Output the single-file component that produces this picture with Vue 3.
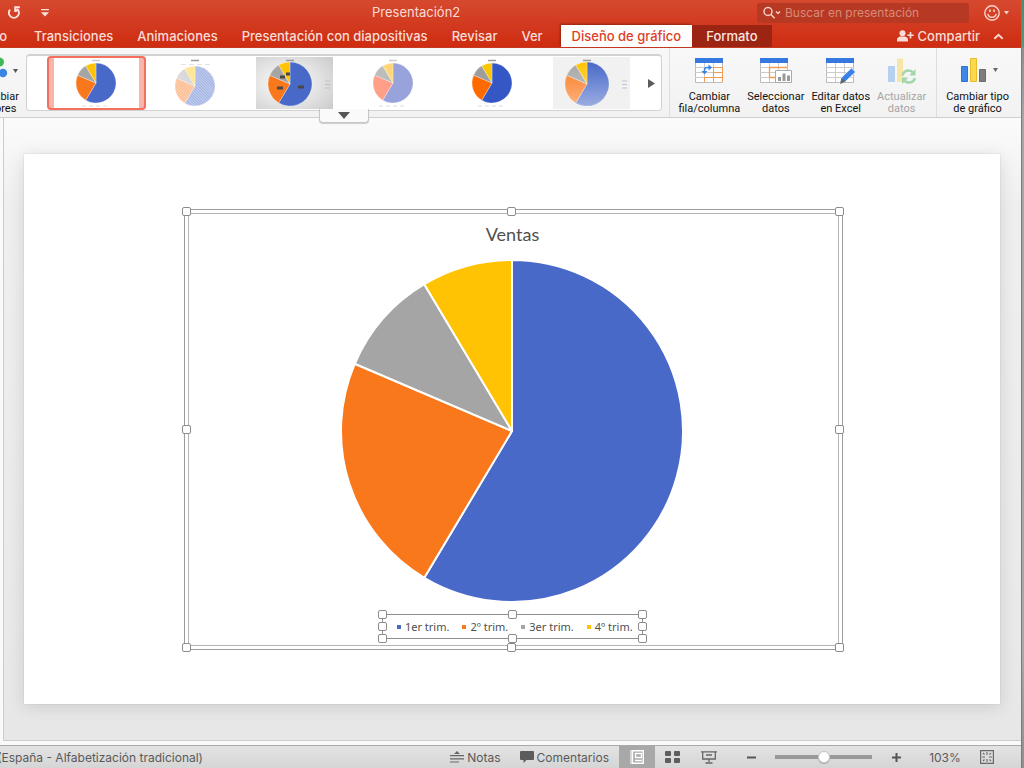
<script setup>
import { ref } from 'vue'

const search = ref('')
const zoom = ref(50)

const sales = [
  { label: '1er trim.', value: 8.2, color: '#4869c8' },
  { label: '2º trim.', value: 3.2, color: '#fa781c' },
  { label: '3er trim.', value: 1.4, color: '#a5a5a5' },
  { label: '4º trim.', value: 1.2, color: '#ffc303' }
]

const total = sales.reduce((sum, s) => sum + s.value, 0)

function slices(cx, cy, r) {
  let angle = 0
  return sales.map((s) => {
    const start = angle
    angle += (s.value / total) * Math.PI * 2
    const large = angle - start > Math.PI ? 1 : 0
    const point = (a) => `${(cx + r * Math.sin(a)).toFixed(2)} ${(cy - r * Math.cos(a)).toFixed(2)}`
    return { ...s, d: `M${cx} ${cy}L${point(start)}A${r} ${r} 0 ${large} 1 ${point(angle)}Z` }
  })
}

const pie = slices(172, 172, 171)

const thumbs = [
  { id: 1, cx: 38, cy: 26, r: 20, kind: 'plain' },
  { id: 2, cx: 38, cy: 29, r: 20, kind: 'hatched' },
  { id: 3, cx: 34, cy: 27, r: 22, kind: 'labelled' },
  { id: 4, cx: 38, cy: 26, r: 20, kind: 'soft' },
  { id: 5, cx: 38, cy: 26, r: 20, kind: 'vivid' },
  { id: 6, cx: 34, cy: 27, r: 22, kind: 'shaded' }
].map((t) => ({ ...t, parts: slices(t.cx, t.cy, t.r) }))

const vivid = ['#3557c6', '#ff6a00', '#9d9d9d', '#fbc500']
const soft = ['#98a3dc', '#ff9f88', '#bcbcbc', '#ffd779']

function fill(thumb, i) {
  if (thumb.kind === 'soft') return soft[i]
  if (thumb.kind === 'vivid') return vivid[i]
  return sales[i].color
}

const tabs = ['Transiciones', 'Animaciones', 'Presentación con diapositivas', 'Revisar', 'Ver']
const handles = ['nw', 'n', 'ne', 'w', 'e', 'sw', 's', 'se']
</script>

<template>
  <div class="app">
    <div class="window">
      <header class="header">
        <div class="titlebar">
          <div class="quick">
            <button class="plain" aria-label="Rehacer">
              <svg width="14" height="14" viewBox="0 0 14 14" fill="none" stroke="#fbe3dd" stroke-width="2">
                <path d="M3 3.6A5 5 0 1 0 10.8 3.6" /><path d="M12.8 1.2H8.2V6" /><path d="M8.4 5.6L11 3" />
              </svg>
            </button>
            <button class="plain" aria-label="Personalizar barra">
              <svg width="10" height="8" viewBox="0 0 10 8" fill="#fbe3dd"><path d="M1 0h8v1.3H1zM1 3.2h8L5 7.4z" /></svg>
            </button>
          </div>
          <h1 class="title">Presentación2</h1>
          <div class="tools">
            <label class="search">
              <svg width="20" height="14" viewBox="0 0 20 14" fill="none" stroke="#f6cfc6" stroke-width="1.5">
                <circle cx="6" cy="5.5" r="4" /><path d="M9 8.5l3.6 3.8M14 5.5l2 2 2-2" />
              </svg>
              <input v-model="search" type="text" placeholder="Buscar en presentación" aria-label="Buscar en presentación">
            </label>
            <button class="plain smile" aria-label="Comentarios de usuario">
              <svg width="26" height="16" viewBox="0 0 26 16" fill="none" stroke="#f9d5cc" stroke-width="1.4">
                <circle cx="8" cy="8" r="7.2" /><path d="M3.800 8.800a4.300 4.300 0 0 0 8.400 0" /><path d="M6 4.5v2.500M10 4.5v2.500" stroke-width="1.6" />
                <path d="M20 6h5l-2.500 3.500z" fill="#f9d5cc" stroke="none" />
              </svg>
            </button>
          </div>
        </div>
        <div class="tabbar">
          <nav class="tabs">
            <div class="clipped"><button class="tab">Diseño</button></div>
            <button v-for="t in tabs" :key="t" class="tab">{{ t }}</button>
            <button class="tab active">Diseño de gráfico</button>
            <button class="tab context">Formato</button>
          </nav>
          <div class="share">
            <button class="plain sharebtn">
              <svg width="17" height="12" viewBox="0 0 17 12" fill="#f9ddd6">
                <circle cx="5.500" cy="3.200" r="3" /><path d="M0 11.500V9.500c0-2 2-2.800 3.500-3.100h4c1.500.3 3.500 1.100 3.500 3.100v2z" />
                <path d="M12.700 2h1.600v2.400h2.400V6h-2.400v2.400h-1.600V6h-2.400V4.400h2.400z" />
              </svg>
              Compartir
            </button>
            <button class="plain" aria-label="Contraer cinta">
              <svg width="11" height="7" viewBox="0 0 11 7" fill="none" stroke="#f9d5cc" stroke-width="2"><path d="M1.300 5.800L5.500 1.800l4.200 4" /></svg>
            </button>
          </div>
        </div>
      </header>

      <section class="ribbon">
        <div class="colors">
          <button class="tool">
            <svg class="icon" width="40" height="28" viewBox="0 0 40 28">
              <circle cx="13" cy="16" r="4.200" fill="#f2a33c" /><circle cx="21.500" cy="5" r="4.500" fill="#41b858" />
              <circle cx="25" cy="16" r="4.200" fill="#3a84e4" /><path d="M35 12h5l-2.500 4z" fill="#555" />
            </svg>
            <span>Cambiar<br>colores</span>
          </button>
        </div>

        <div class="gallery">
          <div class="styles">
            <button
              v-for="t in thumbs" :key="t.id" class="thumb" :class="{ selected: t.id === 1 }"
              :aria-label="'Estilo ' + t.id"
            >
              <svg width="77" height="52" viewBox="0 0 77 52">
                <defs>
                  <radialGradient id="silver" cx=".4" cy=".5" r=".75"><stop offset="0" stop-color="#fff" /><stop offset="1" stop-color="#cdcdcd" /></radialGradient>
                  <linearGradient id="fade" x1="0" y1="0" x2="0" y2="1">
                    <stop offset="0" stop-color="#fff" stop-opacity="0" /><stop offset="1" stop-color="#fff" stop-opacity=".45" />
                  </linearGradient>
                  <pattern id="hatch" width="2" height="2" patternUnits="userSpaceOnUse" patternTransform="rotate(45)">
                    <path d="M0 .5h2" stroke="#fff" stroke-width=".6" stroke-opacity=".6" />
                  </pattern>
                </defs>
                <rect v-if="t.kind === 'labelled'" width="77" height="52" fill="url(#silver)" />
                <rect v-else-if="t.kind === 'shaded'" width="77" height="52" fill="#f1f1f1" />
                <path :d="`M${t.cx - 4} 3.500h8`" :stroke="t.kind === 'soft' || t.kind === 'plain' ? '#ccc' : '#9a9a9a'" stroke-width="1.500" />
                <g :opacity="t.kind === 'hatched' ? 0.5 : 1">
                  <path v-for="(p, i) in t.parts" :key="i" :d="p.d" :fill="fill(t, i)" stroke="#fff" stroke-width=".3" />
                </g>
                <circle v-if="t.kind === 'hatched'" :cx="t.cx" :cy="t.cy" :r="t.r" fill="url(#hatch)" />
                <circle v-if="t.kind === 'shaded'" :cx="t.cx" :cy="t.cy" :r="t.r" fill="url(#fade)" />
                <path v-if="t.kind === 'labelled'" d="M21 31h6M42 30h6M24 20h5M30 17h4" stroke="#484848" stroke-width="2.800" />
                <path v-if="t.kind === 'hatched'" d="M24 7.500h29" stroke="#e2e2e2" stroke-dasharray="5 3" />
                <path v-else-if="t.r === 22" d="M69 24h5M69 27.500h5M69 31h5" stroke="#b9b9c8" stroke-width=".8" />
                <path v-else d="M24 49h28" stroke="#ddd" stroke-dasharray="4 3" />
              </svg>
            </button>
          </div>
          <button class="plain next" aria-label="Estilos siguientes">
            <svg width="7" height="9" viewBox="0 0 7 9" fill="#5c5c5c"><path d="M0 0l7 4.500L0 9z" /></svg>
          </button>
          <button class="plain more" aria-label="Más estilos">
            <svg width="12" height="7" viewBox="0 0 12 7" fill="#555"><path d="M0 0h12L6 7z" /></svg>
          </button>
        </div>

        <div class="group data">
          <button class="tool">
            <svg class="icon" width="28" height="28" viewBox="0 0 28 28" fill="none">
              <path d="M.5 5.500h27v20H.5z" fill="#fff" stroke="#bbb" /><path d="M0 10.500h28M0 15.500h28M0 20.500h28M9.500 5v20M18.500 5v20" stroke="#ccc" />
              <path d="M0 1h28v5H0z" fill="#3478e0" />
              <path d="M18 10.500h9.500M18 15.500h9.500M9 20.500h18.500M18.500 10v15M9.500 20v5M27.500 10v15" stroke="#f59b50" />
              <path d="M9.500 15v-2q0-2.500 2.500-2.500h3" stroke="#3a82e8" stroke-width="1.500" /><path d="M13.500 7.500l3.500 3-3.500 3zM6.500 14h6l-3 3.500z" fill="#3a82e8" />
            </svg>
            <span>Cambiar<br>fila/columna</span>
          </button>
          <button class="tool">
            <svg class="icon" width="34" height="28" viewBox="0 0 34 28" fill="none">
              <path d="M1.500 5.500h27v20h-27z" fill="#fff" stroke="#bbb" /><path d="M1 10.500h28M1 15.500h28M1 20.500h28M10.500 5v20M19.500 5v20" stroke="#ccc" />
              <path d="M1 1h28v5H1z" fill="#3478e0" /><path d="M28 10.500H10.500v10H17" stroke="#f59b50" stroke-width="1.300" />
              <path d="M16.500 13.500h16v12h-16z" fill="#fff" stroke="#aaa" /><path d="M19 20h3v4h-3zM23.500 16.500h3V24h-3zM28 18.500h3V24h-3z" fill="#999" />
            </svg>
            <span>Seleccionar<br>datos</span>
          </button>
          <button class="tool">
            <svg class="icon" width="30" height="28" viewBox="0 0 30 28" fill="none">
              <path d="M.5 5.500h27v20H.5z" fill="#fff" stroke="#bbb" /><path d="M0 10.500h28M0 15.500h28M0 20.500h28M9.500 5v20M18.500 5v20" stroke="#ccc" />
              <path d="M0 1h28v5H0z" fill="#3478e0" />
              <path d="M14 26.500l1.500-6L25.500 11l4 4-10 9.500z" fill="#3a82e8" stroke="#fff" stroke-width=".7" /><path d="M14 27l1.500-6 4 3.800z" fill="#666" />
            </svg>
            <span>Editar datos<br>en Excel</span>
          </button>
          <button class="tool" disabled>
            <svg class="icon" width="30" height="28" viewBox="0 0 30 28" fill="none">
              <path d="M1 9h7v16H1z" fill="#b6d0f2" /><path d="M10 1.500h6V25h-6z" fill="#f8e6a8" />
              <path d="M15.500 18.500q1.500-5 6-5 3 0 5 2.500M28 21q-1.500 4.500-6 4.500-3.500 0-5-2.500" stroke="#a4d6ae" stroke-width="2.500" />
              <path d="M28.500 12v6.500H22zM15 27v-6.500h6.500z" fill="#a4d6ae" />
            </svg>
            <span>Actualizar<br>datos</span>
          </button>
        </div>
        <div class="group type">
          <button class="tool">
            <svg class="icon" width="42" height="28" viewBox="0 0 42 28">
              <path d="M4.500 9.500h6v15h-6z" fill="#3d87ea" stroke="#2f74d4" /><path d="M13.500 1.500h6v23h-6z" fill="#fbd94a" stroke="#e8bd2c" />
              <path d="M22.500 12.500h6v12h-6z" fill="#7d7d7d" stroke="#6b6b6b" /><path d="M36 11h5l-2.500 4z" fill="#666" />
            </svg>
            <span>Cambiar tipo<br>de gráfico</span>
          </button>
        </div>
      </section>

      <main class="stage">
        <div class="canvas">
          <div class="slide">
            <div class="chart">
              <div class="plot">
                <h2>Ventas</h2>
                <svg class="pie" width="344" height="344" viewBox="0 0 344 344" role="img" aria-label="Ventas">
                  <path v-for="p in pie" :key="p.label" :d="p.d" :fill="p.color" stroke="#fff" stroke-width="2" stroke-linejoin="round" />
                </svg>
                <div class="legend">
                  <span v-for="(s, i) in sales" :key="s.label" class="entry"><i :class="'key k' + i" />{{ s.label }}</span>
                  <b v-for="h in handles" :key="h" class="handle" :class="h" />
                </div>
              </div>
              <b v-for="h in handles" :key="h" class="handle" :class="h" />
            </div>
          </div>
        </div>
      </main>

      <footer class="status">
        <div class="language"><span>Español (España - Alfabetización tradicional)</span></div>
        <div class="controls">
          <button class="plain note">
            <svg width="14" height="12" viewBox="0 0 14 12" fill="#666"><path d="M7 0l3 3H4zM0 4h14v1.200H0zM0 7.200h14v1.200H0zM0 10.400h9v1.200H0z" /></svg>
            Notas
          </button>
          <button class="plain note">
            <svg width="14" height="12" viewBox="0 0 14 12" fill="#5c5c5c"><path d="M1 0h12q1 0 1 1v7q0 1-1 1H6.500L3.500 12V9H1Q0 9 0 8V1q0-1 1-1z" /></svg>
            Comentarios
          </button>
          <div class="views">
            <button class="plain view on" aria-label="Normal">
              <svg width="14" height="14" viewBox="0 0 14 14" fill="none" stroke="#fff"><path d="M2.500.7h10.800v12.600H2.500z" stroke-width="1.400" /><path d="M5.500 3.500h6v4h-6zM5 10.500h7" stroke-width="1.400" /><path d="M0 1h3M0 3h3M0 5h3M0 7h3M0 9h3M0 11h3M0 13h3" /></svg>
            </button>
            <button class="plain view" aria-label="Clasificador">
              <svg width="16" height="12" viewBox="0 0 16 12" fill="#5e5e5e"><rect width="6" height="5" rx="1" /><rect x="9" width="6" height="5" rx="1" /><rect y="7" width="6" height="5" rx="1" /><rect x="9" y="7" width="6" height="5" rx="1" /></svg>
            </button>
            <button class="plain view" aria-label="Presentación">
              <svg width="16" height="13" viewBox="0 0 16 13" fill="none" stroke="#666" stroke-width="1.300"><path d="M0 .8h16M1.700 1v7h12.600V1M5 4h6M8 8v3M4.500 12h7" /></svg>
            </button>
          </div>
          <button class="plain step" aria-label="Alejar"><svg width="9" height="9" viewBox="0 0 9 9"><path d="M0 4.500h9" stroke="#555" stroke-width="2" /></svg></button>
          <input v-model="zoom" class="slider" type="range" min="0" max="100" aria-label="Zoom">
          <button class="plain step" aria-label="Acercar"><svg width="9" height="9" viewBox="0 0 9 9"><path d="M0 4.500h9M4.500 0v9" stroke="#555" stroke-width="2" /></svg></button>
          <button class="plain percent">103%</button>
          <button class="plain fit" aria-label="Ajustar a la ventana">
            <svg width="14" height="14" viewBox="0 0 14 14" fill="none" stroke="#6a6a6a"><path d="M.6.6h12.800v12.800H.6z" stroke-width="1.200" /><path d="M7 2v3M7 9v3M2 7h3M9 7h3M3 3l1.500 1.500M11 3L9.500 4.500M3 11l1.500-1.500M11 11L9.500 9.500" stroke-width="1.100" /></svg>
          </button>
        </div>
      </footer>
    </div>
    <div class="edge" />
  </div>
</template>

<style>
body { background: #e9e9e9; }
</style>

<style scoped>
* { box-sizing: border-box; }
.app { display: flex; min-height: 100vh; font-family: Inter, Roboto, "Liberation Sans", sans-serif; overflow: hidden; }
.window { flex: 1; min-width: 0; display: flex; flex-direction: column; }
.edge { width: 3px; background: linear-gradient(#3d9272 0, #4e9a7d 47px, #8f8f8f 48px, #a6a6a6 120px, #a8a8a8 85%, #8f8f8f); border-left: 1px solid #7b7b7b; }
button { font: inherit; border: 0; margin: 0; padding: 0; background: none; color: inherit; white-space: nowrap; }
.plain { display: flex; align-items: center; justify-content: center; }
svg { display: block; flex: none; }

.header { background: linear-gradient(#d6492f, #ce2c10); color: #f9ddd6; border-bottom: 1px solid #c63a22; }
.titlebar { display: grid; grid-template-columns: 372px 1fr auto; align-items: center; height: 25px; }
.quick { display: flex; gap: 19px; padding-left: 7px; }
.title { margin: 0; font-size: 13px; font-weight: 400; line-height: 25px; }
.tools { display: flex; align-items: center; }
.search { display: flex; align-items: center; gap: 3px; width: 212px; height: 20px; padding-left: 5px; background: #b73923; border-radius: 3px; }
.search input { flex: 1; min-width: 0; border: 0; outline: 0; padding: 0; background: none; color: #fff; font: 12px Inter, Roboto, sans-serif; }
.search input::placeholder { color: #da8a7a; opacity: 1; }
.smile { padding: 0 11px 0 15px; }
.tabbar { display: flex; justify-content: space-between; height: 22px; }
.tabs { display: flex; font-size: 13px; font-weight: 500; }
.clipped { display: flex; justify-content: flex-end; width: 22px; padding-right: 3px; overflow: hidden; }
.tab { flex: none; padding: 0 12px; line-height: 22px; }
.active { margin-left: 6px; padding: 0 11px; background: #fdfdfd; color: #dd4027; box-shadow: -1px -1px 2px #8e2411; }
.context { padding: 0 14px; background: #9b2412; color: #fbe6e1; }
.share { display: flex; align-items: center; gap: 13px; padding-right: 17px; font-size: 13px; font-weight: 500; }
.sharebtn { gap: 4px; }

.ribbon { display: flex; height: 70px; background: linear-gradient(#f8f8f8, #f2f2f2); border-bottom: 1px solid #cfcfcf; }
.colors { display: flex; justify-content: flex-end; width: 26px; padding-right: 7px; overflow: hidden; }
.tool { display: flex; flex-direction: column; align-items: center; flex: none; padding-top: 9px; font-family: Roboto, Inter, sans-serif; font-size: 11px; line-height: 12px; color: #111; text-align: center; }
.tool .icon { margin-bottom: 6px; }
.tool:disabled { color: #a5a5a5; }
.gallery { position: relative; display: flex; flex: 1; min-width: 0; margin: 6px 0; border: 1px solid #d2d2d2; border-top-width: 2px; border-radius: 4px; background: #fff; }
.styles { display: flex; flex: 1; padding-left: 20px; overflow: hidden; }
.thumb { display: flex; align-items: center; justify-content: center; flex: none; width: 99px; border-radius: 4px; }
.selected { border: 2px solid #f2705c; background: linear-gradient(90deg, #f8b5ab 5px, #fff 5px calc(100% - 5px), #f8b5ab calc(100% - 5px)); }
.next { width: 19px; }
.more { position: absolute; left: 292px; bottom: -13px; width: 50px; height: 14px; background: #fafafa; border: 1px solid #c6c6c6; border-top: 0; border-radius: 0 0 4px 4px; box-shadow: 0 1px 1px #ccc; }
.group { display: flex; margin-left: 7px; border-left: 1px solid #dedede; }
.data { gap: 7px; padding: 0 3px 0 8px; }
.type { padding: 0 12px 0 9px; }

.stage { flex: 1; display: flex; padding: 0 0 4px 3px; background: #fafafa; border-bottom: 1px solid #a9a9a9; }
.canvas { flex: 1; padding: 36px 21px 36px 20px; border-left: 1px solid #cdcdcd; border-bottom: 1px solid #cdcdcd; background: linear-gradient(#fbfbfb, #efefef 14%, #ebebeb 60%, #e7e7e7); }
.slide { height: 100%; padding-top: 55px; background: #fff; box-shadow: 0 3px 16px rgba(0, 0, 0, .12), 0 0 1px #bbb; }
.chart { position: relative; width: 67.5%; margin-left: 16.4%; padding: 3px; border: 1px solid #9c9c9c; }
.plot { display: flex; flex-direction: column; align-items: center; height: 433px; padding: 10px 2px 0 0; border: 1px solid #b5b5b5; color: #505050; font-family: Lato, sans-serif; }
.plot h2 { margin: 0 0 15px; font-size: 18px; font-weight: 400; line-height: 20px; }
.legend { position: relative; display: flex; align-items: center; gap: 13px; width: 261px; height: 25px; margin-top: 11px; padding-left: 14px; border: 1px solid #8e8e8e; font-size: 11px; white-space: nowrap; font-family: "Noto Sans", Lato, sans-serif; }
.entry { display: flex; align-items: center; gap: 4px; }
.key { width: 4px; height: 4px; }
.k0 { background: #4869c8; }
.k1 { background: #fa781c; }
.k2 { background: #a5a5a5; }
.k3 { background: #ffc303; }
.handle { position: absolute; width: 9px; height: 9px; border: 1px solid #8c8c8c; border-radius: 2px; background: #fff; }
.nw, .n, .ne { top: -3px; }
.sw, .s, .se { bottom: -3px; }
.w, .e { top: calc(50% - 5px); }
.nw, .w, .sw { left: -3px; }
.ne, .e, .se { right: -2px; }
.n, .s { left: calc(50% - 6px); }
.legend .nw, .legend .n, .legend .ne { top: -5px; }
.legend .sw, .legend .s, .legend .se { bottom: -5px; }
.legend .nw, .legend .w, .legend .sw { left: -5px; }
.legend .ne, .legend .e, .legend .se { right: -5px; }
.legend .n, .legend .s { left: calc(50% - 4px); }

.status { display: flex; justify-content: space-between; height: 22px; background: linear-gradient(#e3e3e3, #d5d5d5); color: #5a5a5a; font-size: 12px; }
.language { display: flex; justify-content: flex-end; align-items: center; width: 203px; overflow: hidden; }
.language span { flex: none; white-space: nowrap; }
.controls { display: flex; }
.note { gap: 3px; margin-right: 19px; }
.note + .note { margin-right: 10px; }
.views { display: flex; }
.view { width: 36px; }
.on { background: #a8a8a8; }
.step { width: 48px; }
.slider { appearance: none; width: 97px; height: 22px; margin: 0; background: linear-gradient(#999, #999) center / 97px 4px no-repeat; }
.slider::-webkit-slider-thumb { appearance: none; width: 12px; height: 12px; border: 1px solid #c6c6c6; border-radius: 50%; background: #fff; box-shadow: 0 1px 1px #aaa; }
.percent { width: 50px; }
.fit { width: 34px; margin-right: 17px; }
</style>
